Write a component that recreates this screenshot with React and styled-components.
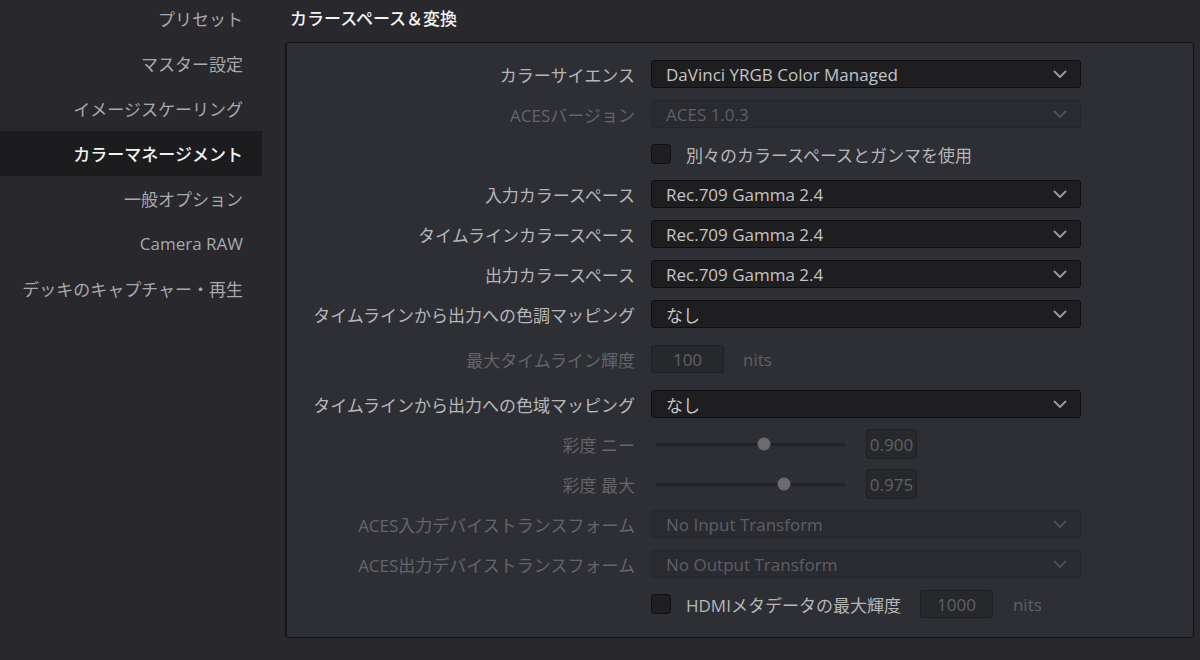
import React from 'react';
import styled, { createGlobalStyle } from 'styled-components';

const GlobalStyle = createGlobalStyle`
  html, body {
    margin: 0;
    padding: 0;
    background: #28282d;
  }
  body {
    font-family: 'Open Sans', 'Noto Sans CJK JP', sans-serif;
    font-size: 17px;
    color: #b8b8b8;
  }
`;

const Page = styled.div`
  display: flex;
  width: 1200px;
  height: 660px;
  overflow: hidden;
  background: #28282d;
`;

const Sidebar = styled.nav`
  width: 262px;
  flex-shrink: 0;
  display: flex;
  flex-direction: column;
  margin-top: -4px;
`;

const NavItem = styled.div`
  height: 45px;
  display: flex;
  align-items: center;
  justify-content: flex-end;
  padding-right: 19px;
  color: ${(p) => (p.$active ? '#f2f2f2' : '#a9a9ac')};
  background: ${(p) => (p.$active ? '#1c1c1f' : 'transparent')};
  font-weight: ${(p) => (p.$active ? 500 : 400)};
  white-space: nowrap;
`;

const Main = styled.main`
  flex: 1;
  padding: 0 6px 0 23px;
  display: flex;
  flex-direction: column;
`;

const Heading = styled.h2`
  margin: 0;
  padding: 8px 0 12px 5px;
  font-size: 17px;
  line-height: 22px;
  font-weight: 500;
  color: #f4f4f4;
`;

const Panel = styled.section`
  border: 1px solid #131316;
  box-shadow: inset 1px 0 0 #1a1a1d;
  border-radius: 3px;
  background: #2e2f35;
  padding: 17px 0 19px 0;
  display: grid;
  grid-template-columns: 349px 1fr;
  column-gap: 16px;
  row-gap: 12px;
  align-items: center;
`;

const Label = styled.div`
  text-align: right;
  white-space: nowrap;
  color: ${(p) => (p.$disabled ? '#646469' : '#b6b6b8')};
`;

const Control = styled.div`
  display: flex;
  align-items: center;
  height: ${(p) => p.$h || 28}px;
`;

const Select = styled.div`
  width: 430px;
  height: 28px;
  box-sizing: border-box;
  display: flex;
  align-items: center;
  justify-content: space-between;
  padding: 0 13px 0 14px;
  border-radius: 3px;
  border: 1px solid ${(p) => (p.$disabled ? '#25262a' : '#0f0f11')};
  background: ${(p) => (p.$disabled ? '#2a2b30' : '#1e1e20')};
  color: ${(p) => (p.$disabled ? '#5e5f64' : '#c4c4c6')};
  white-space: nowrap;
`;

const Chevron = ({ dim }) => (
  <svg width="14" height="9" viewBox="0 0 14 9">
    <path
      d="M1.5 1.5 L7 7 L12.5 1.5"
      fill="none"
      stroke={dim ? '#4f5055' : '#9a9a9c'}
      strokeWidth="1.8"
      strokeLinecap="round"
      strokeLinejoin="round"
    />
  </svg>
);

const Check = styled.div`
  width: 20px;
  height: 20px;
  box-sizing: border-box;
  border-radius: 3px;
  border: 1px solid #111113;
  background: #1f1f21;
  flex-shrink: 0;
`;

const CheckText = styled.span`
  margin-left: 15px;
  color: #b6b6b8;
  white-space: nowrap;
`;

const NumBox = styled.div`
  width: ${(p) => p.$w || 73}px;
  height: ${(p) => p.$hh || 28}px;
  box-sizing: border-box;
  display: flex;
  align-items: center;
  justify-content: center;
  border-radius: 3px;
  border: 1px solid #1f2024;
  background: #27282c;
  color: #5f6065;
  margin-left: ${(p) => p.$ml || 0}px;
  flex-shrink: 0;
`;

const Unit = styled.span`
  margin-left: ${(p) => p.$ml || 19}px;
  color: #5f6065;
`;

const Track = styled.div`
  position: relative;
  width: 189px;
  height: 3px;
  margin-left: 5px;
  background: #222327;
  border-radius: 2px;
`;

const Knob = styled.div`
  position: absolute;
  top: 50%;
  width: 13px;
  height: 13px;
  border-radius: 50%;
  background: #6c6c70;
  transform: translate(-50%, -50%);
`;

const Slider = ({ value, min = 0, max = 1 }) => {
  const pct = ((value - min) / (max - min)) * 100;
  return (
    <>
      <Track>
        <Knob style={{ left: `${pct}%` }} />
      </Track>
      <NumBox $w={51} $hh={30} $ml={21}>{value.toFixed(3)}</NumBox>
    </>
  );
};

const SelectRow = ({ label, value, disabled }) => (
  <>
    <Label $disabled={disabled}>{label}</Label>
    <Control>
      <Select $disabled={disabled}>
        <span>{value}</span>
        <Chevron dim={disabled} />
      </Select>
    </Control>
  </>
);

const navItems = [
  'プリセット',
  'マスター設定',
  'イメージスケーリング',
  'カラーマネージメント',
  '一般オプション',
  'Camera RAW',
  'デッキのキャプチャー・再生',
];

export default function App() {
  return (
    <>
      <GlobalStyle />
      <Page>
        <Sidebar>
          {navItems.map((n) => (
            <NavItem key={n} $active={n === 'カラーマネージメント'}>{n}</NavItem>
          ))}
        </Sidebar>
        <Main>
          <Heading>カラースペース＆変換</Heading>
          <Panel>
            <SelectRow label="カラーサイエンス" value="DaVinci YRGB Color Managed" />
            <SelectRow label="ACESバージョン" value="ACES 1.0.3" disabled />

            <div />
            <Control>
              <Check />
              <CheckText>別々のカラースペースとガンマを使用</CheckText>
            </Control>

            <SelectRow label="入力カラースペース" value="Rec.709 Gamma 2.4" />
            <SelectRow label="タイムラインカラースペース" value="Rec.709 Gamma 2.4" />
            <SelectRow label="出力カラースペース" value="Rec.709 Gamma 2.4" />
            <SelectRow label="タイムラインから出力への色調マッピング" value="なし" />

            <Label $disabled>最大タイムライン輝度</Label>
            <Control $h={38}>
              <NumBox>100</NumBox>
              <Unit>nits</Unit>
            </Control>

            <SelectRow label="タイムラインから出力への色域マッピング" value="なし" />

            <Label $disabled>彩度 ニー</Label>
            <Control>
              <Slider value={0.9} min={0.5} max={1.2} />
            </Control>

            <Label $disabled>彩度 最大</Label>
            <Control>
              <Slider value={0.975} min={0.5} max={1.2} />
            </Control>

            <SelectRow label="ACES入力デバイストランスフォーム" value="No Input Transform" disabled />
            <SelectRow label="ACES出力デバイストランスフォーム" value="No Output Transform" disabled />

            <div />
            <Control>
              <Check />
              <CheckText>HDMIメタデータの最大輝度</CheckText>
              <NumBox $ml={19}>1000</NumBox>
              <Unit $ml={20}>nits</Unit>
            </Control>
          </Panel>
        </Main>
      </Page>
    </>
  );
}
